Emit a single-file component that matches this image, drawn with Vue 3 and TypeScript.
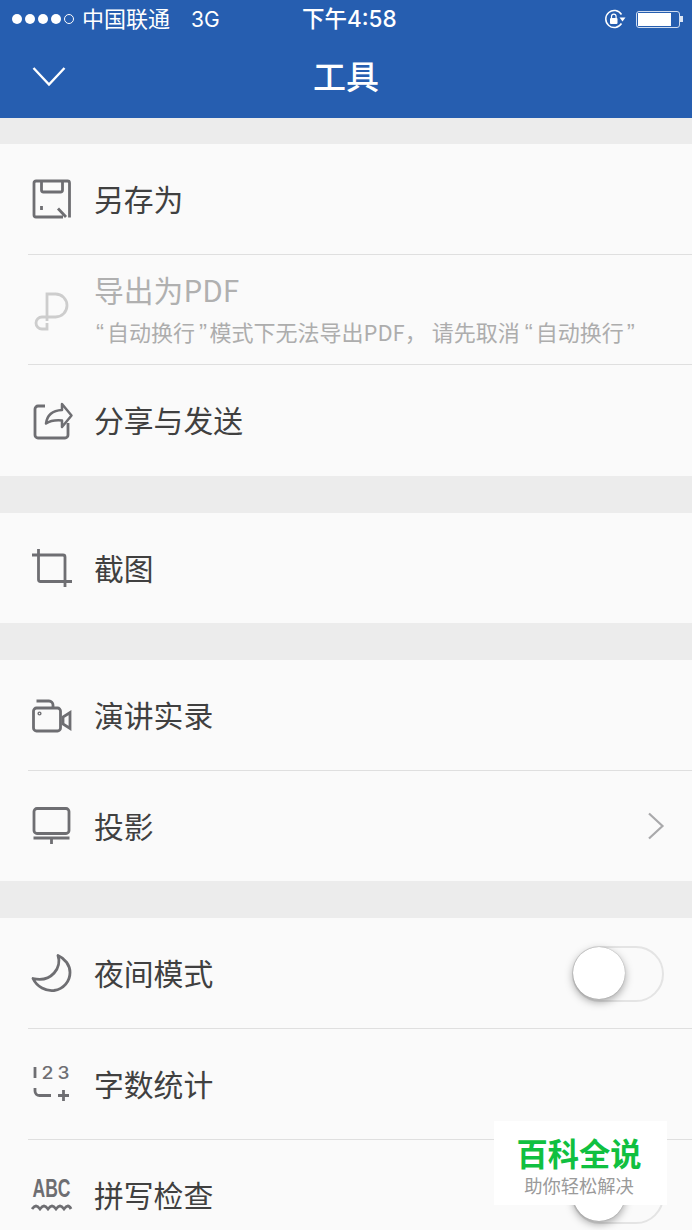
<script setup lang="ts">
const dots: number[] = [1, 2, 3, 4]
</script>

<template>
  <div class="screen">
    <header class="head">
      <div class="status">
        <div class="signal">
          <i v-for="d in dots" :key="d" class="dot"></i>
          <i class="dot empty"></i>
        </div>
        <span class="carrier">中国联通</span>
        <span class="net">3G</span>
        <span class="time">下午4:58</span>
        <svg class="lock" width="22" height="20" viewBox="0 0 22 20" fill="none">
          <path d="M17.500 5.500A8.500 8.500 0 1 0 17.500 14.500" stroke="#fff" stroke-width="1.500" />
          <path d="M15.500 8.500h6l-3 4z" fill="#fff" />
          <rect x="6" y="9" width="7.500" height="6" rx="1" fill="#fff" />
          <path d="M7.500 9.500V7.500a2.300 2.300 0 0 1 4.600 0v2" stroke="#fff" stroke-width="1.200" />
        </svg>
        <div class="battery"><div class="charge"></div></div>
        <i class="nub"></i>
      </div>
      <div class="nav">
        <svg class="down" width="34" height="21" viewBox="0 0 34 21" fill="none">
          <path d="M1.500 2L17 18.500 32.500 2" stroke="#fff" stroke-width="2.400" />
        </svg>
        <h1>工具</h1>
      </div>
    </header>

    <section class="group">
      <div class="row">
        <svg class="ic" viewBox="0 0 40 40" fill="none">
          <path d="M31 38H4a2 2 0 0 1-2-2V4a2 2 0 0 1 2-2h31.500a2 2 0 0 1 2 2v34.500M9.500 2v9a2 2 0 0 0 2 2h17a2 2 0 0 0 2-2V2M26 29.500l8 8.500" />
          <path d="M9.500 27v4" />
        </svg>
        <span class="label">另存为</span>
      </div>
      <div class="row off">
        <svg class="ic" viewBox="0 0 40 40" fill="none">
          <path d="M15 31V4h8.500a11.500 11.500 0 0 1 0 23H10a6 6 0 0 0 0 12h5v-6" />
        </svg>
        <div class="stack">
          <span class="label">导出为PDF</span>
          <span class="note"><span class="q open">“</span>自动换行<span class="q close">”</span>模式下无法导出PDF<span class="comma">，</span>请先取消<span class="q open gap">“</span>自动换行<span class="q end">”</span></span>
        </div>
      </div>
      <div class="row tall">
        <svg class="ic" viewBox="0 0 40 40" fill="none">
          <path d="M13 5H6a3 3 0 0 0-3 3v26a3 3 0 0 0 3 3h27a3 3 0 0 0 3-3V22" />
          <path d="M14 22.500c1-8 6-13 16-13.500V3l9.500 11.500L30 26v-6.500c-6-.5-12 .3-16 3z" stroke-linejoin="round" stroke-width="2.500" />
        </svg>
        <span class="label">分享与发送</span>
      </div>
    </section>

    <section class="group">
      <div class="row">
        <svg class="ic" viewBox="0 0 40 40" fill="none">
          <path d="M6.500 1v30.500a2 2 0 0 0 2 2H40M0 7h31a2 2 0 0 1 2 2v30" />
        </svg>
        <span class="label">截图</span>
      </div>
    </section>

    <section class="group">
      <div class="row">
        <svg class="ic" viewBox="0 0 40 40" fill="none">
          <path d="M4.500 6H17a4 4 0 0 1 4 4v3" />
          <rect x="1.500" y="13" width="27" height="23" rx="3" />
          <path d="M38 17.500v16l-7-4.500v-7z" />
          <circle cx="7.500" cy="18.500" r=".7" />
        </svg>
        <span class="label">演讲实录</span>
      </div>
      <div class="row">
        <svg class="ic" viewBox="0 0 40 40" fill="none">
          <rect x="2" y="2.500" width="35" height="25" rx="3" />
          <path d="M1.500 32h36M19.500 32v6" />
        </svg>
        <span class="label">投影</span>
        <svg class="more" width="18" height="28" viewBox="0 0 18 28" fill="none">
          <path d="M2 1.500L15.500 14 2 26.500" stroke="#a9a9ab" stroke-width="2.200" />
        </svg>
      </div>
    </section>

    <section class="group">
      <div class="row">
        <svg class="ic" viewBox="0 0 40 40" fill="none">
          <path d="M26 2.500C30 14 20 30 1 25.500 5 34 14 38.500 22 37.500 32 36 38 28 38 19.500 38 12 33 5.500 26 2.500z" stroke-linejoin="round" />
        </svg>
        <span class="label">夜间模式</span>
        <div class="switch"><div class="knob"></div></div>
      </div>
      <div class="row">
        <svg class="ic" viewBox="0 0 40 40" fill="none">
          <path d="M3 3v11" />
          <text class="num" x="9.500" y="15" textLength="12" lengthAdjust="spacingAndGlyphs">2</text>
          <text class="num" x="25.500" y="15" textLength="12" lengthAdjust="spacingAndGlyphs">3</text>
          <path d="M3 24v3a4.500 4.500 0 0 0 4.500 4.500H19M26 31.500h11M31.500 26v11" />
        </svg>
        <span class="label">字数统计</span>
      </div>
      <div class="row">
        <svg class="ic" viewBox="0 0 40 40" fill="none">
          <text class="abc" x="0.500" y="22" textLength="38" lengthAdjust="spacingAndGlyphs">ABC</text>
          <path d="M0 34c3-4 5-4 8 0 3-4 5-4 8 0 3-4 5-4 8 0 3-4 5-4 8 0 3-4 5-4 7 0" />
        </svg>
        <span class="label">拼写检查</span>
        <div class="switch"><div class="knob"></div></div>
      </div>
    </section>

    <aside class="mark">
      <strong>百科全说</strong>
      <span>助你轻松解决</span>
    </aside>
  </div>
</template>

<style>
html, body { margin: 0; background: #ececec; }
</style>

<style scoped>
.screen {
  position: relative;
  width: 692px;
  height: 1230px;
  overflow: hidden;
  background: #ececec;
  font-family: "Noto Sans CJK SC", "Liberation Sans", sans-serif;
}
.head { height: 118px; background: #265eb0; color: #fff; }
.status {
  height: 38px;
  display: flex;
  align-items: center;
  padding-left: 12px;
}
.signal { display: flex; gap: 3px; width: 70px; flex: none; }
.dot { width: 10px; height: 10px; border-radius: 50%; background: #fff; box-sizing: border-box; flex: none; }
.dot.empty { background: none; border: 1px solid #fff; }
.carrier { font-size: 22px; width: 109px; flex: none; line-height: 34px; padding-bottom: 4px; }
.net { font-family: Inter, sans-serif; font-size: 21px; width: 111px; flex: none; }
.time {
  font-size: 22.500px;
  font-weight: 500;
  width: 302px;
  flex: none;
  line-height: 34px;
  font-family: Inter, "Noto Sans CJK SC", sans-serif;
}
.lock { margin-right: 10px; flex: none; }
.battery {
  width: 44px;
  height: 17px;
  box-sizing: border-box;
  border: 1.500px solid #cfdcf0;
  border-radius: 3px;
  padding: 1px;
  flex: none;
}
.charge { width: 33px; height: 100%; background: #fff; }
.nub { width: 2.500px; height: 6px; background: #dbe5f4; flex: none; }
.nav { position: relative; height: 80px; display: flex; align-items: center; justify-content: center; }
.down { position: absolute; left: 32px; top: 28px; }
h1 { margin: -6px 0 0; font-size: 33px; font-weight: 500; line-height: 1; }
.group { background: #fafafa; margin-top: 37px; }
.group:first-of-type { margin-top: 26px; }
.row {
  position: relative;
  height: 110px;
  display: flex;
  align-items: center;
  padding-left: 32px;
}
.row.off { height: 109px; }
.row.tall { height: 111px; }
.row + .row::before {
  content: "";
  position: absolute;
  left: 28px;
  right: 0;
  top: -1px;
  height: 1px;
  background: #dfdfdf;
}
.row + .row { margin-top: 1px; }
.ic {
  width: 40px;
  height: 40px;
  flex: none;
  margin-right: 23px;
  overflow: visible;
  stroke: #6e6e72;
  stroke-width: 2.800;
}
.label { font-size: 29.800px; line-height: 40px; color: #404040; margin-left: -1px; padding-bottom: 3px; }
.stack { display: flex; flex-direction: column; margin-top: -2px; }
.off .ic { stroke: #cdcdcd; }
.off .label { color: #b0b0b0; padding-bottom: 0; }
.note { font-size: 22px; line-height: 30px; color: #adadad; margin: 7px 0 0 -1px; white-space: nowrap; }
.q { font-family: "Liberation Sans", sans-serif; font-size: 24px; }
.q.open { margin-left: 2px; letter-spacing: 3px; }
.q.gap { margin-left: 5px; }
.q.close { margin-left: 4px; letter-spacing: 2.500px; }
.q.end { margin-left: 3px; }
.comma { margin-right: 5px; }
.num, .abc { fill: #6e6e72; stroke: none; }
.num { font-family: Inter, sans-serif; font-size: 17px; font-weight: 500; }
.abc { font-family: "Liberation Sans", sans-serif; font-size: 25px; font-weight: 700; }
.more { position: absolute; left: 647px; top: 41px; }
.switch {
  position: absolute;
  left: 572px;
  top: 28px;
  width: 92px;
  height: 56px;
  box-sizing: border-box;
  border: 2px solid #e4e4e4;
  border-radius: 28px;
}
.knob {
  position: absolute;
  left: -1px;
  top: -1px;
  width: 52px;
  height: 52px;
  border-radius: 50%;
  background: #fff;
  box-shadow: 0 3px 8px rgba(0, 0, 0, 0.35), 0 0 1px rgba(0, 0, 0, 0.4);
}
.mark {
  position: absolute;
  left: 494px;
  top: 1121px;
  width: 170px;
  padding-right: 3px;
  height: 84px;
  background: #fff;
  display: flex;
  flex-direction: column;
  align-items: center;
}
.mark strong { font-size: 31.300px; line-height: 34px; margin-top: 15px; color: #10c040; font-weight: 700; }
.mark span { font-size: 18.300px; line-height: 24px; margin-top: 3px; color: #9a9a9a; }
</style>
